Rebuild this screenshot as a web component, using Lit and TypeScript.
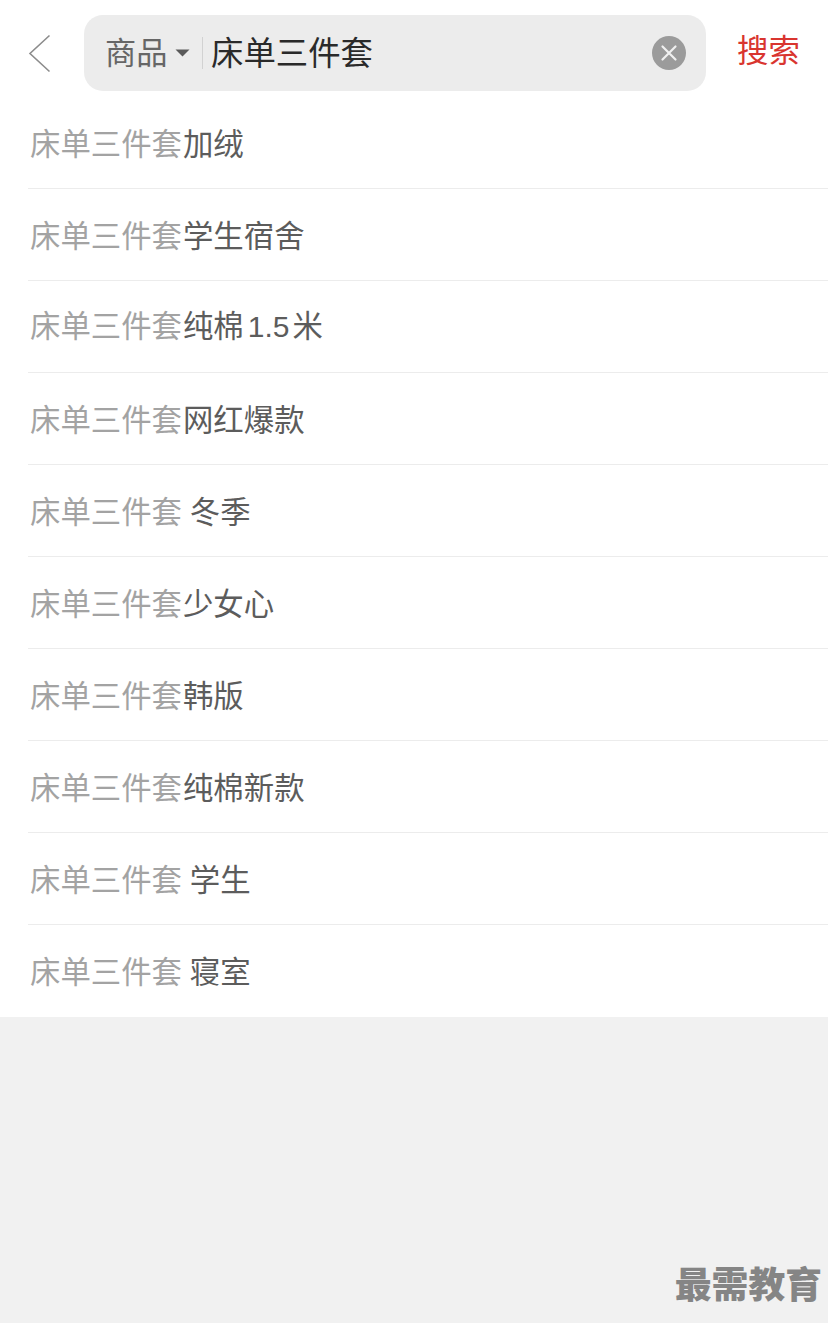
import { LitElement, html, css } from "lit";
import { customElement } from "lit/decorators.js";

const ROWS = ["加绒", "学生宿舍", "纯棉|1.5|米", "网红爆款", " 冬季", "少女心", "韩版", "纯棉新款", " 学生", " 寝室"];

@customElement("app-root")
export class AppRoot extends LitElement {
  static styles = css`
    :host {
      display: flex;
      flex-direction: column;
      min-height: 1323px;
      position: relative;
      background: #f1f1f1;
      font-family: "Noto Sans CJK SC", "Liberation Sans", sans-serif;
    }
    .top {
      background: #fff;
      height: 97px;
      display: flex;
      align-items: flex-start;
      box-sizing: border-box;
      padding: 15px 0 0 28px;
    }
    .back { width: 24px; height: 40px; margin: 19px 32px 0 0; flex: none; }
    .search {
      width: 622px;
      height: 76px;
      border-radius: 19px;
      background: #ececec;
      display: flex;
      align-items: center;
      box-sizing: border-box;
      padding: 0 20px 0 21px;
      flex: none;
    }
    .scope { font-size: 31.2px; line-height: 76px; color: #666; width: 62px; margin-top: -4px; white-space: nowrap; }
    .caret { width: 15px; height: 8px; margin: 0 12px 0 8px; flex: none; }
    .div { width: 1px; height: 32px; background: #d2d2d2; flex: none; margin-right: 8px; }
    .query { font-size: 32.4px; color: #2a2a2a; flex: 1; white-space: nowrap; margin-top: -6px; }
    .clear { width: 34px; height: 34px; flex: none; margin-top: -1px; }
    .go { font-size: 31.4px; color: #d9352f; line-height: 76px; margin-left: 31px; margin-top: -4px; white-space: nowrap; }
    .list { background: #fff; padding-left: 28px; height: 920px; flex: none; }
    .row {
      height: 92px;
      box-sizing: border-box;
      border-bottom: 1px solid #ececec;
      padding: 0 0 0 2px;
      display: flex;
      align-items: center;
      font-size: 30.4px;
      line-height: 92px;
      white-space: pre;
      color: #5c5c5c;
    }
    .row:last-child { border-bottom: none; height: 91px; }
    .hint { color: #a3a3a3; margin-right: 1px; }
    .num { margin: 0 3px 0 4px; font-family: "Liberation Sans", sans-serif; font-size: 30px; }
    .t { position: relative; top: -1px; }
    .mark {
      position: absolute;
      right: 6px;
      top: 1260px;
      font-size: 36.8px;
      font-weight: 900;
      line-height: 44px;
      color: #858585;
      white-space: nowrap;
    }
  `;

  private renderRest(s: string) {
    if (s.includes("|")) {
      const [a, b, c] = s.split("|");
      return html`${a}<span class="num">${b}</span>${c}`;
    }
    return s;
  }

  render() {
    return html`
      <div class="top">
        <svg class="back" viewBox="0 0 24 40" fill="none" stroke="#8c8c8c" stroke-width="1.6">
          <path d="M21.5 1.5 L2 19.5 L21.5 37.5" />
        </svg>
        <div class="search">
          <span class="scope">商品</span>
          <svg class="caret" viewBox="0 0 15 8"><path d="M0.5 0.5 H14.5 L7.5 7.5 Z" fill="#5a5a5a" /></svg>
          <span class="div"></span>
          <span class="query">床单三件套</span>
          <svg class="clear" viewBox="0 0 34 34">
            <circle cx="17" cy="17" r="17" fill="#9b9b9b" />
            <path d="M10.5 10.5 L23.5 23.5 M23.5 10.5 L10.5 23.5" stroke="#f0f0f0" stroke-width="2.2" stroke-linecap="round" />
          </svg>
        </div>
        <span class="go">搜索</span>
      </div>
      <div class="list">
        ${ROWS.map(
          (r) => html`<div class="row"><span class="t"><span class="hint">床单三件套</span>${this.renderRest(r)}</span></div>`
        )}
      </div>
      <div class="mark">最需教育</div>
    `;
  }
}
